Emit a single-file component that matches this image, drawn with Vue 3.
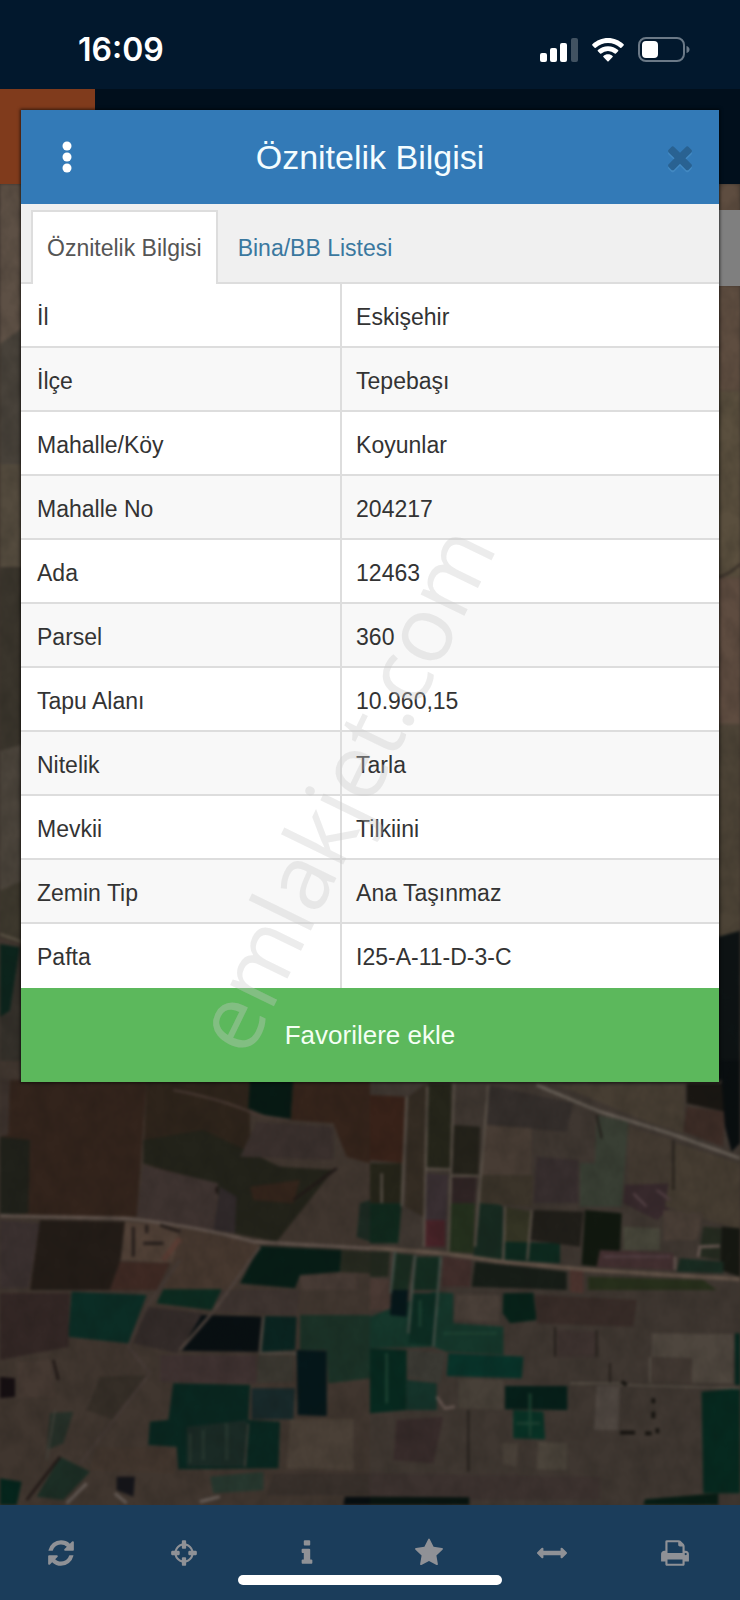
<template>
  <div class="app">
    <header class="status-bar">
      <time class="clock">16:09</time>
      <div class="status-icons">
        <svg class="signal" viewBox="0 0 38 24" aria-label="Sinyal">
          <rect x="0" y="15" width="7" height="9" rx="2" />
          <rect x="10" y="10" width="7" height="14" rx="2" />
          <rect x="20" y="5" width="7" height="19" rx="2" />
          <rect x="31" y="0" width="7" height="24" rx="2" opacity="0.25" />
        </svg>
        <svg class="wifi" viewBox="0 0 32 24" aria-label="Wi-Fi">
          <path d="M16 0C22 0 27.500 2.400 31.600 6.200Q32.200 6.800 31.600 7.400L29.400 9.700Q28.800 10.200 28.200 9.700A18 18 0 0 0 3.800 9.700Q3.200 10.200 2.600 9.700L.4 7.400Q-.2 6.800 .4 6.200C4.500 2.400 10 0 16 0Z" />
          <path d="M16 8.200C19.900 8.200 23.400 9.700 26.100 12.100Q26.700 12.700 26.100 13.300L23.900 15.500Q23.300 16 22.700 15.500A10 10 0 0 0 9.300 15.500Q8.700 16 8.100 15.500L5.900 13.300Q5.300 12.700 5.900 12.100C8.600 9.700 12.100 8.200 16 8.200Z" />
          <path d="M16 16.200C17.800 16.200 19.400 16.900 20.600 17.900Q21.200 18.500 20.600 19.100L16.600 23.300Q16 23.900 15.400 23.300L11.400 19.100Q10.800 18.500 11.400 17.900C12.600 16.900 14.200 16.200 16 16.200Z" />
        </svg>
        <svg class="battery" viewBox="0 0 52 25" aria-label="Pil">
          <rect x="1" y="1" width="45" height="23" rx="7" fill="none" stroke="#6b7987" stroke-width="2" />
          <rect x="4" y="4" width="16" height="17" rx="4" />
          <path d="M48.500 9Q51.500 10 51.500 12.500T48.500 16Z" fill="#6b7987" />
        </svg>
      </div>
    </header>

    <div class="app-bar">
      <div class="app-logo"></div>
    </div>

    <main class="map">
      <svg class="map-canvas" viewBox="0 552 2220 3963" preserveAspectRatio="none" aria-hidden="true">
        <defs>
          <filter id="soften" x="0" y="0" width="100%" height="100%" color-interpolation-filters="sRGB">
            <feGaussianBlur stdDeviation="4" />
          </filter>
          <filter id="grain" x="0" y="0" width="100%" height="100%" color-interpolation-filters="sRGB">
            <feTurbulence type="fractalNoise" baseFrequency="0.02 0.015" numOctaves="3" seed="7" />
            <feColorMatrix values="0 0 0 0 0.06  0 0 0 0 0.06  0 0 0 0 0.05  1.400 0 0 0 -0.450" />
          </filter>
        </defs>
        <g filter="url(#soften)">
          <rect x="-30" y="500" width="2280" height="4060" fill="#40362f" />
          <g v-for="tile in tiles" :key="tile.name" :transform="`translate(${tile.x} ${tile.y})`">
            <polygon v-for="(f, i) in tile.fields" :key="i" :fill="f[0]" :points="f[1]" />
            <path v-for="(r, i) in tile.roads" :key="'r' + i" :stroke="r[0]" :stroke-width="r[1]" :d="r[2]" fill="none" />
          </g>
        </g>
        <rect y="552" width="2220" height="3963" filter="url(#grain)" opacity="0.2" />
      </svg>
      <div class="map-control"></div>
    </main>

    <nav class="toolbar">
      <button v-for="tool in tools" :key="tool.label" type="button" class="tool" :aria-label="tool.label">
        <svg viewBox="0 0 1792 1792"><path :d="tool.path" /></svg>
      </button>
    </nav>
    <div class="home-indicator"></div>

    <section class="modal" role="dialog" aria-labelledby="modal-title">
      <div class="modal-header">
        <button type="button" class="icon-button" aria-label="Menü">
          <svg class="dots" viewBox="0 0 10 32">
            <circle cx="5" cy="5" r="4.500" />
            <circle cx="5" cy="16" r="4.500" />
            <circle cx="5" cy="27" r="4.500" />
          </svg>
        </button>
        <h1 id="modal-title">Öznitelik Bilgisi</h1>
        <button type="button" class="icon-button" aria-label="Kapat">
          <svg class="close" viewBox="0 0 1792 1792"><path :d="closePath" /></svg>
        </button>
      </div>

      <div class="tabs">
        <a
          v-for="tab in tabs"
          :key="tab.id"
          href="#"
          :class="['tab', { active: activeTab === tab.id }]"
          @click.prevent="activeTab = tab.id"
        >{{ tab.label }}</a>
      </div>

      <table class="info-table">
        <tbody>
          <tr v-for="row in rows" :key="row.label">
            <th scope="row">{{ row.label }}</th>
            <td>{{ row.value }}</td>
          </tr>
        </tbody>
      </table>

      <button type="button" class="favorite-button">Favorilere ekle</button>
      <div class="watermark">emlakjet.com</div>
    </section>
  </div>
</template>

<script setup>
import { ref } from 'vue'

const activeTab = ref('info')

const tabs = [
  { id: 'info', label: 'Öznitelik Bilgisi' },
  { id: 'list', label: 'Bina/BB Listesi' }
]

const rows = [
  { label: 'İl', value: 'Eskişehir' },
  { label: 'İlçe', value: 'Tepebaşı' },
  { label: 'Mahalle/Köy', value: 'Koyunlar' },
  { label: 'Mahalle No', value: '204217' },
  { label: 'Ada', value: '12463' },
  { label: 'Parsel', value: '360' },
  { label: 'Tapu Alanı', value: '10.960,15' },
  { label: 'Nitelik', value: 'Tarla' },
  { label: 'Mevkii', value: 'Tilkiini' },
  { label: 'Zemin Tip', value: 'Ana Taşınmaz' },
  { label: 'Pafta', value: 'I25-A-11-D-3-C' }
]

const closePath = 'M1490 1322q0 40-28 68l-136 136q-28 28-68 28t-68-28l-294-294-294 294q-28 28-68 28t-68-28l-136-136q-28-28-28-68t28-68l294-294-294-294q-28-28-28-68t28-68l136-136q28-28 68-28t68 28l294 294 294-294q28-28 68-28t68 28l136 136q28 28 28 68t-28 68l-294 294 294 294q28 28 28 68z'

const tools = [
  {
    label: 'Yenile',
    path: 'M1639 1056q0 5-1 7-64 268-268 434.500t-478 166.500q-146 0-282.500-55t-243.500-157l-129 129q-19 19-45 19t-45-19-19-45v-448q0-26 19-45t45-19h448q26 0 45 19t19 45-19 45l-137 137q71 66 161 102t187 36q134 0 250-65t186-179q11-17 53-117 8-23 30-23h192q13 0 22.500 9.500t9.500 22.500zm25-800v448q0 26-19 45t-45 19h-448q-26 0-45-19t-19-45 19-45l138-138q-148-137-349-137-134 0-250 65t-186 179q-11 17-53 117-8 23-30 23h-199q-13 0-22.500-9.500t-9.500-22.500v-7q65-268 270-434.500t480-166.500q146 0 284 55.500t245 156.500l130-129q19-19 45-19t45 19 19 45z'
  },
  {
    label: 'Konum',
    path: 'M1325 1024h-109q-26 0-45-19t-19-45v-128q0-26 19-45t45-19h109q-32-108-112.500-188.500t-188.500-112.500v109q0 26-19 45t-45 19h-128q-26 0-45-19t-19-45v-109q-108 32-188.500 112.500t-112.500 188.500h109q26 0 45 19t19 45v128q0 26-19 45t-45 19h-109q32 108 112.500 188.500t188.500 112.500v-109q0-26 19-45t45-19h128q26 0 45 19t19 45v109q108-32 188.500-112.500t112.500-188.500zm339-192v128q0 26-19 45t-45 19h-143q-37 161-154.500 278.500t-278.500 154.500v143q0 26-19 45t-45 19h-128q-26 0-45-19t-19-45v-143q-161-37-278.500-154.500t-154.500-278.500h-143q-26 0-45-19t-19-45v-128q0-26 19-45t45-19h143q37-161 154.500-278.500t278.500-154.500v-143q0-26 19-45t45-19h128q26 0 45 19t19 45v143q161 37 278.500 154.500t154.500 278.500h143q26 0 45 19t19 45z'
  },
  {
    label: 'Bilgi',
    path: 'M1216 1344v128q0 26-19 45t-45 19h-512q-26 0-45-19t-19-45v-128q0-26 19-45t45-19h64v-384h-64q-26 0-45-19t-19-45v-128q0-26 19-45t45-19h384q26 0 45 19t19 45v576h64q26 0 45 19t19 45zm-128-1152v192q0 26-19 45t-45 19h-256q-26 0-45-19t-19-45v-192q0-26 19-45t45-19h256q26 0 45 19t19 45z'
  },
  {
    label: 'Favoriler',
    path: 'M1728 647q0 22-26 48l-363 354 86 500q1 7 1 20 0 21-10.500 35.500t-30.500 14.500q-19 0-40-12l-449-236-449 236q-22 12-40 12-21 0-31.500-14.500t-10.500-35.500q0-6 2-20l86-500-364-354q-25-27-25-48 0-37 56-46l502-73 225-455q19-41 49-41t49 41l225 455 502 73q56 9 56 46z'
  },
  {
    label: 'Ölçüm',
    path: 'M1792 896q0 26-19 45l-256 256q-19 19-45 19t-45-19-19-45v-128h-1024v128q0 26-19 45t-45 19-45-19l-256-256q-19-19-19-45t19-45l256-256q19-19 45-19t45 19 19 45v128h1024v-128q0-26 19-45t45-19 45 19l256 256q19 19 19 45z'
  },
  {
    label: 'Yazdır',
    path: 'M448 1536h896v-256h-896v256zm0-640h896v-384h-160q-40 0-68-28t-28-68v-160h-640v640zm1152 64q0-26-19-45t-45-19-45 19-19 45 19 45 45 19 45-19 19-45zm128 0v416q0 13-9.500 22.500t-22.500 9.500h-224v160q0 40-28 68t-68 28h-960q-40 0-68-28t-28-68v-160h-224q-13 0-22.500-9.500t-9.500-22.500v-416q0-79 56.500-135.500t135.500-56.500h64v-544q0-40 28-68t68-28h672q40 0 88 20t76 48l152 152q28 28 48 76t20 88v256h64q79 0 135.500 56.500t56.500 135.500z'
  }
]

// fields: [colour, corner points], roads: [colour, width, path]
const tiles = [
  {
    name: 'edges',
    x: 0,
    y: 552,
    fields: [
      ['#5d5045', '0,0 70,0 70,480 0,480'],
      ['#48423a', '0,480 70,430 70,900 0,900'],
      ['#544b3e', '0,840 70,840 70,1150 0,1150'],
      ['#3a352c', '0,1150 70,1150 70,1700 0,1700'],
      ['#4b443b', '0,1700 70,1680 70,2090 0,2120'],
      ['#3d382d', '0,2120 70,2090 70,2280 0,2260'],
      ['#0c241c', '0,2280 60,2290 30,2480 0,2500'],
      ['#34302a', '60,2290 70,2290 70,2630 0,2630 0,2500 30,2480'],
      ['#5e4d40', '2150,0 2220,0 2220,620 2150,620'],
      ['#5a4f3e', '2150,620 2220,620 2220,1180 2150,1180'],
      ['#5e4c40', '2150,1180 2220,1180 2220,1620 2150,1620'],
      ['#4c4336', '2150,1620 2220,1620 2220,2260 2150,2260'],
      ['#0d1314', '2150,2260 2220,2240 2220,2700 2150,2700']
    ],
    roads: [
      ['#6c6253', 5, 'M0 2250L70 2275'],
      ['#362e28', 7, 'M2150 1180Q2185 1175 2220 1140'],
      ['#3f352c', 8, 'M2150 300H2220']
    ]
  },
  {
    name: 'west',
    x: 0,
    y: 3180,
    fields: [
      ['#33241c', '0,60 440,60 410,470 0,465'],
      ['#3b312c', '0,60 30,60 25,225 0,230'],
      ['#20211a', '0,230 90,240 85,460 0,465'],
      ['#2e241b', '440,60 750,60 750,310 600,370 430,310'],
      ['#23231a', '430,240 610,210 840,320 1000,330 830,545 700,520 640,370 430,310'],
      ['#33241b', '750,380 900,360 880,430 760,420'],
      ['#071a14', '750,60 880,60 872,178 800,168 745,145'],
      ['#35241b', '880,60 1110,60 1110,310 1040,290 1000,190 872,180'],
      ['#3a302d', '770,185 1000,200 1000,300 720,290'],
      ['#3e3330', '430,315 655,370 640,515 410,470'],
      ['#30292a', '660,380 710,410 705,520 640,510'],
      ['#40362f', '1070,300 1075,540 830,545 1000,340'],
      ['#1c2a22', '1080,430 1110,420 1110,545 1070,530'],
      ['#3a302f', '0,480 120,490 85,685 0,685'],
      ['#231c17', '120,480 375,485 360,605 330,690 90,690'],
      ['#3e2923', '360,605 510,610 470,690 330,690'],
      ['#514137', '375,485 540,495 520,610 365,600'],
      ['#46382f', '545,500 780,555 700,690 490,690 520,600'],
      ['#071d16', '780,558 1025,570 1020,635 900,645 885,685 720,670'],
      ['#26291f', '1025,570 1110,575 1110,640 1020,635'],
      ['#473b35', '900,648 1070,640 1070,690 905,690'],
      ['#0b2d25', '215,695 440,705 385,850 205,830'],
      ['#0c2b20', '490,688 665,688 635,750 470,730'],
      ['#332b29', '440,740 610,760 530,880 400,850'],
      ['#3e3430', '665,690 900,690 890,765 640,755'],
      ['#332725', '0,700 210,700 205,860 0,900'],
      ['#080f12', '605,765 785,770 775,875 540,872'],
      ['#0a2420', '795,768 890,770 885,870 785,875'],
      ['#1b3227', '900,765 1110,765 1110,955 985,970 980,870 900,870'],
      ['#3f3231', '480,885 770,885 770,970 480,965'],
      ['#3b3831', '775,885 880,890 880,965 770,968'],
      ['#05171a', '890,870 980,872 980,1068 893,1065'],
      ['#160f12', '0,950 45,955 45,1010 0,1015'],
      ['#453932', '50,905 150,900 165,1010 50,1015'],
      ['#352e27', '300,950 450,945 340,1080 260,1050'],
      ['#092720', '520,970 750,975 745,1080 840,1085 835,1225 535,1228 530,1160 445,1155 450,1085 505,1080'],
      ['#1a2a25', '560,1100 740,1080 740,1220 560,1220'],
      ['#18292a', '755,985 885,985 880,1078 755,1078'],
      ['#4a4037', '870,1078 1060,1078 1060,1230 860,1225'],
      ['#263028', '150,1060 220,1055 190,1150 140,1170'],
      ['#42362e', '290,1165 530,1165 520,1240 270,1230'],
      ['#1c2e25', '180,1190 270,1235 190,1320 110,1310'],
      ['#05251c', '0,1255 65,1265 50,1335 0,1335'],
      ['#27382f', '630,1250 790,1235 790,1290 640,1300'],
      ['#38302b', '820,1240 1110,1240 1110,1305 800,1305'],
      ['#15151a', '350,1250 405,1250 400,1310 350,1290'],
      ['#060d10', '1035,1310 1110,1310 1110,1335 1030,1335']
    ],
    roads: [
      ['#61544d', 10, 'M0 467L380 475Q600 500 760 545L1110 565'],
      ['#4a3b35', 6, 'M520 90Q680 120 770 165L870 180'],
      ['#4d423c', 9, 'M780 560L640 755L540 870'],
      ['#453a35', 9, 'M540 600L440 740L385 860L450 940L240 1210'],
      ['#28201d', 10, 'M400 500V590M440 495V520M430 550H490M480 495L540 515'],
      ['#593c33', 16, 'M490 600L540 535'],
      ['#4d4a43', 7, 'M790 770L780 880H890'],
      ['#43413a', 5, 'M165 1050L140 1200M745 1090L735 1220'],
      ['#655b55', 10, 'M200 1330L260 1270M345 1300L380 1330M600 1325L660 1310'],
      ['#211917', 8, 'M160 900L175 960M80 1320L180 1190M650 380V400M880 420L1010 325'],
      ['#27372f', 8, 'M570 1120V1210M610 1110V1200M680 1090V1200']
    ]
  },
  {
    name: 'east',
    x: 1110,
    y: 3180,
    fields: [
      ['#3f3731', '0,60 1110,60 1110,1335 0,1335'],
      ['#382219', '0,105 105,110 100,310 0,300'],
      ['#252419', '0,310 95,310 95,430 0,430'],
      ['#10291d', '0,430 95,430 85,550 0,550'],
      ['#342c23', '115,110 170,70 160,470 105,440'],
      ['#25251a', '175,70 245,70 240,325 165,320'],
      ['#24221a', '250,195 330,200 325,345 245,340'],
      ['#392f32', '165,340 235,345 225,560 160,560'],
      ['#482328', '165,480 225,480 225,560 160,560'],
      ['#2f2424', '245,350 320,350 315,430 245,430'],
      ['#24301d', '240,430 315,430 310,580 230,575'],
      ['#172a20', '325,400 400,440 400,600 310,590'],
      ['#343424', '405,440 485,455 475,550 405,545'],
      ['#0d2a1f', '405,545 570,550 570,610 400,600'],
      ['#342e2b', '355,75 610,130 590,215 350,195'],
      ['#473c34', '345,195 485,205 485,345 335,345'],
      ['#3b342a', '330,345 490,345 485,440 330,430'],
      ['#372e2e', '500,290 625,300 625,430 490,430'],
      ['#393f34', '680,165 775,185 755,440 630,440 630,310 675,310'],
      ['#433a31', '775,200 910,240 905,385 775,385'],
      ['#37292c', '765,375 915,370 905,440 860,480 760,430'],
      ['#463d32', '915,250 1110,310 1110,510 885,440'],
      ['#473e33', '560,75 945,75 940,220 840,190 650,110'],
      ['#3c2c26', '950,140 1065,155 1060,260 940,215'],
      ['#1a1713', '950,70 1080,70 1065,155 950,130'],
      ['#090e10', '1050,0 1110,0 1110,250 1085,275 1065,200'],
      ['#201e19', '490,450 640,455 630,560 480,540'],
      ['#11180f', '645,450 755,460 750,570 690,620 635,615'],
      ['#47463a', '760,500 870,505 870,570 760,570'],
      ['#493e36', '880,450 1000,460 980,540 880,540'],
      ['#422f30', '690,570 910,580 910,630 680,620'],
      ['#252b20', '1000,500 1055,505 1050,600 985,590'],
      ['#161812', '1055,500 1110,505 1110,650 1050,630'],
      ['#192b21', '930,595 1060,605 1060,640 920,635'],
      ['#22281e', '0,575 60,575 55,650 0,650'],
      ['#192c20', '75,580 130,585 115,690 65,690'],
      ['#142c20', '140,590 210,590 205,690 130,690'],
      ['#412e2b', '220,590 305,600 300,680 215,680'],
      ['#171d17', '315,605 590,635 590,690 305,680'],
      ['#272f1b', '655,650 1000,660 1040,690 655,690'],
      ['#4b332e', '600,620 640,625 640,700 600,695'],
      ['#4a3a34', '0,655 60,660 60,750 0,750'],
      ['#15372b', '0,770 190,695 250,700 250,790 400,800 400,885 230,875 190,860 0,865'],
      ['#06171a', '65,690 115,690 110,770 60,765'],
      ['#0c2c22', '130,700 200,700 190,855 115,850'],
      ['#493f38', '260,705 390,705 385,785 250,780'],
      ['#072219', '400,700 490,698 500,780 420,790 398,760'],
      ['#382c28', '495,705 800,720 790,800 500,790'],
      ['#3d322f', '560,810 675,815 675,890 560,890'],
      ['#07291f', '0,865 110,870 110,1050 0,1060'],
      ['#3b3a34', '115,870 230,880 210,970 115,950'],
      ['#08342a', '235,880 460,890 455,955 230,948'],
      ['#15332a', '110,960 200,970 200,1050 110,1050'],
      ['#474038', '265,955 400,960 400,1050 265,1045'],
      ['#061f19', '405,978 592,978 592,1050 405,1048'],
      ['#083326', '430,1050 520,1055 525,1138 430,1135'],
      ['#4e463e', '845,820 1090,822 1088,970 965,970 965,895 845,890'],
      ['#413832', '850,895 965,895 965,970 845,965'],
      ['#05271e', '1095,820 1110,820 1110,975 1095,975'],
      ['#4e4640', '680,978 750,978 745,1110 672,1110'],
      ['#06291f', '995,995 1110,985 1110,1300 1000,1300'],
      ['#372b2a', '80,1080 220,1070 190,1210 70,1200'],
      ['#4b443b', '505,1145 590,1150 590,1230 500,1228'],
      ['#494139', '395,1150 445,1150 440,1220 400,1210'],
      ['#3c322f', '0,1240 690,1250 690,1320 0,1320'],
      ['#081410', '0,1310 298,1312 298,1335 0,1335'],
      ['#071c14', '825,1318 1045,1300 1045,1335 820,1335']
    ],
    roads: [
      ['#625348', 12, 'M0 563L220 580L400 605L660 630L1110 658'],
      ['#645c54', 10, 'M500 75L690 155L900 220L1110 295'],
      ['#5a5148', 7, 'M110 110L95 440M172 80L162 560M252 70L235 575M355 75L315 560M405 440L400 600M485 450L472 600M35 340V430'],
      ['#5c5349', 6, 'M165 328H240M245 348H325'],
      ['#46524a', 7, 'M75 575L62 700M135 585L115 820M212 590L190 860'],
      ['#231e1a', 6, 'M555 800V890M680 810V890M295 1050V1235M720 910V970M680 165L695 235M910 240V390'],
      ['#575047', 5, 'M750 975L1110 985M840 890V970M600 970H750'],
      ['#15130f', 11, 'M750 1118H795M825 1120H845M850 1055V1075M850 1015V1030M862 1105V1120M755 965L770 975'],
      ['#655650', 9, 'M200 1010L225 1045L255 1040M915 590V630M985 590L990 560L1050 558'],
      ['#1d4232', 8, 'M150 720V800M220 820H380M50 880V1030M440 1090H510M480 1000V1130'],
      ['#513f42', 7, 'M790 400L830 440M860 390L900 420M700 590H900']
    ]
  }
]
</script>

<style>
body {
  margin: 0;
  background: #1b3d5b;
}
</style>

<style scoped>
.app {
  position: relative;
  display: flex;
  flex-direction: column;
  min-height: 100vh;
  overflow: hidden;
  font-family: "Liberation Sans", Arial, sans-serif;
}

button {
  border: none;
  padding: 0;
  background: none;
  font-family: inherit;
  cursor: pointer;
}

/* Status bar */
.status-bar {
  display: flex;
  align-items: center;
  justify-content: space-between;
  height: 89px;
  box-sizing: border-box;
  padding: 10px 50px 0 78px;
  background: #02182d;
}

.clock {
  color: #fff;
  font-family: Inter, sans-serif;
  font-size: 32px;
  font-weight: 600;
}

.status-icons {
  display: flex;
  align-items: center;
  gap: 14px;
  fill: #fff;
}

.signal {
  width: 38px;
  height: 24px;
}

.wifi {
  width: 32px;
  height: 24px;
}

.battery {
  width: 52px;
  height: 25px;
}

.app-bar {
  height: 95px;
  background: #010f1c;
}

.app-logo {
  width: 95px;
  height: 100%;
  background: #803b1c;
}

/* Map */
.map {
  position: relative;
  flex: 1;
}

.map-canvas {
  position: absolute;
  width: 100%;
  height: 100%;
  background: #40362f;
}

.map-control {
  position: absolute;
  top: 26px;
  right: 0;
  width: 60px;
  height: 76px;
  background: #7f7f7f;
}

/* Bottom toolbar */
.toolbar {
  display: flex;
  height: 95px;
  padding-right: 4px;
  background: #1b3d5b;
}

.tool {
  display: flex;
  flex: 1;
  align-items: center;
  justify-content: center;
}

.tool svg {
  width: 30px;
  height: 30px;
  fill: #8f9196;
}

.home-indicator {
  position: absolute;
  bottom: 15px;
  left: 50%;
  width: 264px;
  height: 10px;
  border-radius: 5px;
  background: #fff;
  transform: translateX(-50%);
}

/* Modal */
.modal {
  position: absolute;
  top: 110px;
  right: 21px;
  left: 21px;
  background: #fff;
  box-shadow: 0 0 3px 1px rgba(0, 0, 0, 0.6);
}

.modal-header {
  display: flex;
  align-items: center;
  justify-content: space-between;
  height: 94px;
  padding: 0 15px;
  background: #337ab7;
}

.modal-header h1 {
  margin: 0;
  color: #f4fdff;
  font-size: 34px;
  font-weight: 400;
}

.icon-button {
  display: flex;
  align-items: center;
  justify-content: center;
  width: 62px;
  height: 50px;
}

.dots {
  width: 10px;
  height: 32px;
  fill: #fff;
}

.close {
  width: 36px;
  height: 36px;
  margin-left: 14px;
  fill: #296292;
  filter: drop-shadow(0 2px 0 #4289c2);
}

.tabs {
  display: flex;
  align-items: flex-end;
  gap: 4px;
  height: 78px;
  padding: 0 10px;
  border-bottom: 2px solid #ddd;
  background: #f0f0f0;
}

.tab {
  box-sizing: border-box;
  height: 74px;
  margin-bottom: -2px;
  padding: 0 14px;
  border: 2px solid transparent;
  border-bottom: none;
  color: #3a789f;
  font-size: 23px;
  line-height: 72px;
  text-decoration: none;
}

.tab.active {
  border-color: #ddd;
  background: #fff;
  color: #555;
}

.info-table {
  width: 100%;
  border-collapse: separate;
  border-spacing: 0;
  table-layout: fixed;
  color: #333;
  font-size: 23px;
}

.info-table th,
.info-table td {
  box-sizing: border-box;
  height: 64px;
  padding: 4px 14px 0;
  border-bottom: 2px solid #ddd;
  font-weight: 400;
  text-align: left;
}

.info-table th {
  width: 46%;
  padding-left: 16px;
  border-right: 2px solid #ddd;
}

.info-table tr:nth-child(even) {
  background: #f8f8f8;
}

.info-table tr:last-child th,
.info-table tr:last-child td {
  padding-top: 2px;
  border-bottom: none;
}

.favorite-button {
  display: block;
  width: 100%;
  height: 94px;
  background: #5cb85c;
  color: #f4fff4;
  font-size: 26px;
}

.watermark {
  position: absolute;
  top: 678px;
  left: 46%;
  color: rgba(200, 200, 200, 0.35);
  font-family: "Open Sans", sans-serif;
  font-size: 91px;
  line-height: 1;
  pointer-events: none;
  transform: translate(-50%, -50%) rotate(-64deg);
}
</style>
